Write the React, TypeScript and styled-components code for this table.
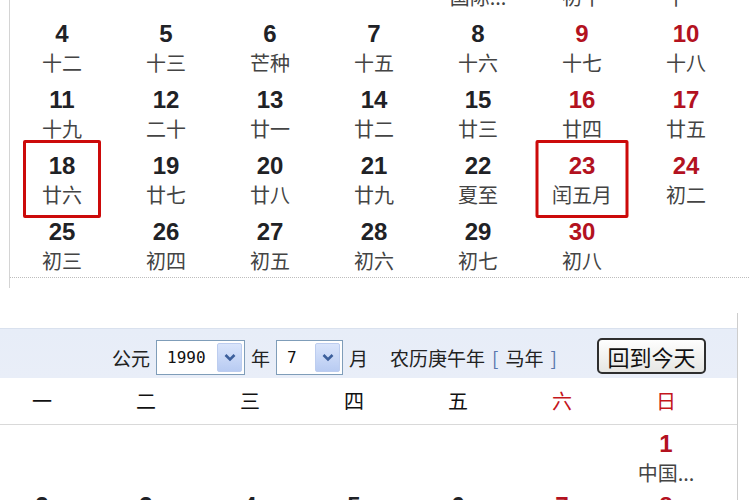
import React from "react";
import styled, { createGlobalStyle } from "styled-components";

const GlobalStyle = createGlobalStyle`
  html, body { margin: 0; padding: 0; background: #ffffff; overflow: hidden; }
  body { font-family: "Liberation Sans", "Noto Sans CJK SC", sans-serif; }
  * { box-sizing: border-box; }
`;

const CJK = `"Noto Sans CJK SC", "Liberation Sans", sans-serif`;
const RED = "#b3121f";
const DARK = "#1f2226";

type Day = { n: number; l: string; red?: boolean; box?: number } | null;

const topRows: Day[][] = [
  [null, null, null, null, { n: 1, l: "国际..." }, { n: 2, l: "初十", red: true }, { n: 3, l: "十一", red: true }],
  [
    { n: 4, l: "十二" }, { n: 5, l: "十三" }, { n: 6, l: "芒种" }, { n: 7, l: "十五" },
    { n: 8, l: "十六" }, { n: 9, l: "十七", red: true }, { n: 10, l: "十八", red: true },
  ],
  [
    { n: 11, l: "十九" }, { n: 12, l: "二十" }, { n: 13, l: "廿一" }, { n: 14, l: "廿二" },
    { n: 15, l: "廿三" }, { n: 16, l: "廿四", red: true }, { n: 17, l: "廿五", red: true },
  ],
  [
    { n: 18, l: "廿六", box: 78 }, { n: 19, l: "廿七" }, { n: 20, l: "廿八" }, { n: 21, l: "廿九" },
    { n: 22, l: "夏至" }, { n: 23, l: "闰五月", red: true, box: 93 }, { n: 24, l: "初二", red: true },
  ],
  [
    { n: 25, l: "初三" }, { n: 26, l: "初四" }, { n: 27, l: "初五" }, { n: 28, l: "初六" },
    { n: 29, l: "初七" }, { n: 30, l: "初八", red: true }, null,
  ],
];

const bottomRows: Day[][] = [
  [null, null, null, null, null, null, { n: 1, l: "中国...", red: true }],
  [
    { n: 2, l: "初十" }, { n: 3, l: "十一" }, { n: 4, l: "十二" }, { n: 5, l: "十三" },
    { n: 6, l: "十四" }, { n: 7, l: "小暑", red: true }, { n: 8, l: "十六", red: true },
  ],
];

const weekdays = ["一", "二", "三", "四", "五", "六", "日"];

const Page = styled.div`
  width: 750px;
  height: 500px;
  overflow: hidden;
  background: #fff;
`;

const TopPanel = styled.div`
  margin-top: -53px;
  margin-left: 9px;
  border-left: 1px solid #d4d4d4;
  padding-bottom: 10px;
`;

const MonthGrid = styled.div`
  display: grid;
  grid-template-columns: repeat(7, 104px);
  width: 739px;
  padding-right: 11px;
  border-bottom: 1px dotted #bdbdbd;
`;

const Cell = styled.div<{ $h: number; $pt: number }>`
  position: relative;
  height: ${(p) => p.$h}px;
  padding-top: ${(p) => p.$pt}px;
  text-align: center;
`;

const DayNum = styled.div<{ $red?: boolean }>`
  font-family: "Liberation Sans", Arial, sans-serif;
  font-weight: 700;
  font-size: 24px;
  line-height: 30px;
  color: ${(p) => (p.$red ? RED : DARK)};
`;

const Lunar = styled.div`
  font-family: ${CJK};
  font-size: 20px;
  line-height: 28px;
  color: #444;
  white-space: nowrap;
`;

const Highlight = styled.div<{ $w: number }>`
  position: absolute;
  top: -5px;
  bottom: -7px;
  left: 50%;
  width: ${(p) => p.$w}px;
  transform: translateX(-50%);
  border: 3px solid #cc0a0a;
  border-radius: 2px;
  pointer-events: none;
`;

const BottomPanel = styled.div`
  margin-top: 25px;
  margin-left: -10px;
  width: 748px;
  border-right: 1px solid #cdcdcd;
  padding-top: 15px;
`;

const Toolbar = styled.div`
  height: 50px;
  padding-top: 8px;
  padding-left: 122px;
  display: flex;
  align-items: center;
  gap: 6px;
  background: linear-gradient(#e7edf8, #e9eef8);
  border-top: 1px solid #d9e1ee;
  font-family: ${CJK};
  font-size: 19px;
  color: #222;
`;

const Label = styled.span<{ $ml?: number }>`
  margin-left: ${(p) => p.$ml ?? 0}px;
  white-space: nowrap;
`;

const Bracket = styled.span`
  color: #5a78ad;
  margin: 0 7px;
`;

const SelectBox = styled.div<{ $w: number }>`
  display: flex;
  width: ${(p) => p.$w}px;
  height: 35px;
  padding: 2px;
  border: 1px solid #7f9db9;
  background: #fff;
`;

const SelectValue = styled.span`
  flex: 1;
  padding-left: 8px;
  font-family: "DejaVu Sans Mono", "Liberation Mono", monospace;
  font-size: 16px;
  line-height: 29px;
  color: #111;
`;

const ArrowBtn = styled.span`
  width: 25px;
  display: flex;
  align-items: center;
  justify-content: center;
  background: linear-gradient(#dae5fb, #b8cbf2);
  border: 1px solid #bdcdef;
  border-radius: 2px;
`;

const TodayBtn = styled.button`
  margin-left: 27px;
  width: 109px;
  height: 36px;
  margin-top: -4px;
  border: 2px solid #2e2e2e;
  border-radius: 5px;
  background: linear-gradient(#fefefe, #e6e6e3);
  font-family: ${CJK};
  font-size: 22px;
  line-height: 30px;
  color: #111;
  padding: 0;
`;

const WeekHeader = styled.div`
  display: grid;
  grid-template-columns: repeat(7, 104px);
  height: 47px;
  border-bottom: 1px solid #d9d9d9;
  background: #fff;
`;

const WeekDay = styled.div<{ $red?: boolean }>`
  text-align: center;
  font-family: ${CJK};
  font-size: 20px;
  line-height: 46px;
  color: ${(p) => (p.$red ? "#c4161c" : "#111")};
`;

const BodyGrid = styled.div`
  display: grid;
  grid-template-columns: repeat(7, 104px);
`;

const Chevron = () => (
  <svg width="12" height="9" viewBox="0 0 12 9">
    <path d="M1.5 2 L6 6.5 L10.5 2" fill="none" stroke="#3c5f9c" strokeWidth="2.6" />
  </svg>
);

const DayCell = ({ d, h, pt }: { d: Day; h: number; pt: number }) => (
  <Cell $h={h} $pt={pt}>
    {d && (
      <>
        <DayNum $red={d.red}>{d.n}</DayNum>
        <Lunar>{d.l}</Lunar>
        {d.box && <Highlight $w={d.box} />}
      </>
    )}
  </Cell>
);

export default function App() {
  return (
    <Page>
      <GlobalStyle />
      <TopPanel>
        <MonthGrid>
          {topRows.flatMap((row, r) =>
            row.map((d, c) => <DayCell key={`t${r}-${c}`} d={d} h={66} pt={6} />)
          )}
        </MonthGrid>
      </TopPanel>
      <BottomPanel>
        <Toolbar>
          <Label>公元</Label>
          <SelectBox $w={89}>
            <SelectValue>1990</SelectValue>
            <ArrowBtn>
              <Chevron />
            </ArrowBtn>
          </SelectBox>
          <Label>年</Label>
          <SelectBox $w={67}>
            <SelectValue>7</SelectValue>
            <ArrowBtn>
              <Chevron />
            </ArrowBtn>
          </SelectBox>
          <Label>月</Label>
          <Label $ml={16}>
            农历庚午年<Bracket>[</Bracket>马年<Bracket>]</Bracket>
          </Label>
          <TodayBtn>回到今天</TodayBtn>
        </Toolbar>
        <WeekHeader>
          {weekdays.map((w, i) => (
            <WeekDay key={w} $red={i >= 5}>
              {w}
            </WeekDay>
          ))}
        </WeekHeader>
        <BodyGrid>
          {bottomRows.flatMap((row, r) =>
            row.map((d, c) => <DayCell key={`b${r}-${c}`} d={d} h={62} pt={4} />)
          )}
        </BodyGrid>
      </BottomPanel>
    </Page>
  );
}
